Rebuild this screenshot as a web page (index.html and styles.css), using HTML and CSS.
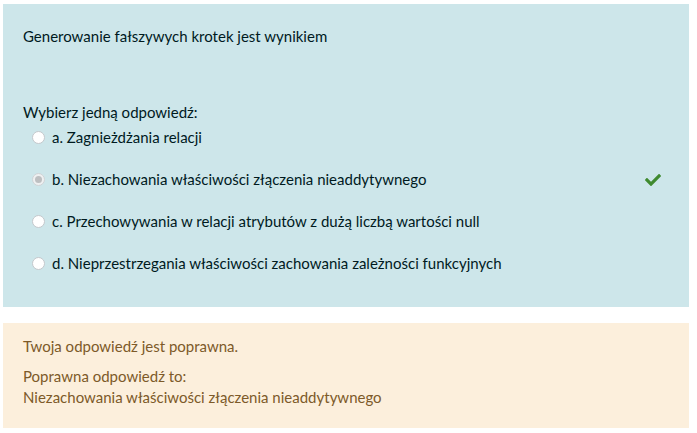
FILE: index.html
```html
<!DOCTYPE html>
<html lang="pl">
<head>
<meta charset="utf-8">
<title>Pytanie</title>
<link rel="stylesheet" href="styles.css">
</head>
<body>
<div class="page">
  <div class="formulation">
    <div class="qtext">Generowanie fałszywych krotek jest wynikiem</div>
    <div class="prompt">Wybierz jedną odpowiedź:</div>
    <div class="answers">
      <div class="option">
        <span class="radio"></span>
        <span class="label">a. Zagnieżdżania relacji</span>
      </div>
      <div class="option">
        <span class="radio checked"></span>
        <span class="label">b. Niezachowania właściwości złączenia nieaddytywnego</span>
        <svg class="check" viewBox="0 0 512 512" width="16" height="16"><path fill="#3f8a2f" d="M173.9 439.4L7.5 273c-10-10-10-26.2 0-36.2l36.2-36.2c10-10 26.2-10 36.2 0L192 312.7 432.1 72.6c10-10 26.2-10 36.2 0l36.2 36.2c10 10 10 26.2 0 36.2L210.1 439.4c-10 10-26.2 10-36.2 0z"/></svg>
      </div>
      <div class="option">
        <span class="radio"></span>
        <span class="label">c. Przechowywania w relacji atrybutów z dużą liczbą wartości null</span>
      </div>
      <div class="option">
        <span class="radio"></span>
        <span class="label">d. Nieprzestrzegania właściwości zachowania zależności funkcyjnych</span>
      </div>
    </div>
  </div>
  <div class="outcome">
    <div class="fb-line">Twoja odpowiedź jest poprawna.</div>
    <div class="right-answer">Poprawna odpowiedź to:<br>Niezachowania właściwości złączenia nieaddytywnego</div>
  </div>
</div>
</body>
</html>
```
FILE: styles.css
```css
html, body {
  margin: 0;
  padding: 0;
  background: #ffffff;
}
body {
  font-family: Lato, "Open Sans", sans-serif;
  font-size: 15px;
  line-height: 21px;
}
.page {
  padding: 4px 8px 0 3px;
}
.formulation {
  background: #cde6ea;
  color: #001a1e;
  padding: 22px 20px 33px 20px;
}
.qtext {
  margin-bottom: 55px;
}
.prompt {
  margin-bottom: 4px;
}
.answers {
  display: flex;
  flex-direction: column;
  gap: 21px;
}
.option {
  display: flex;
  align-items: center;
  padding-left: 9px;
}
.radio {
  box-sizing: border-box;
  width: 13px;
  height: 13px;
  border-radius: 50%;
  background: #ffffff;
  border: 1px solid #c4c8cc;
  margin-right: 7px;
  display: flex;
  align-items: center;
  justify-content: center;
}
.radio.checked {
  background: #eef0f1;
  border-color: #cfd3d6;
}
.radio.checked::after {
  content: "";
  width: 7px;
  height: 7px;
  border-radius: 50%;
  background: #bdbfc1;
}
.label {
  flex: 1;
}
.check {
  margin-right: 8px;
}
.outcome {
  margin-top: 16px;
  background: #fcefdc;
  color: #7d5a29;
  padding: 13px 20px 20px 20px;
}
.fb-line {
  margin-bottom: 9px;
}
```
